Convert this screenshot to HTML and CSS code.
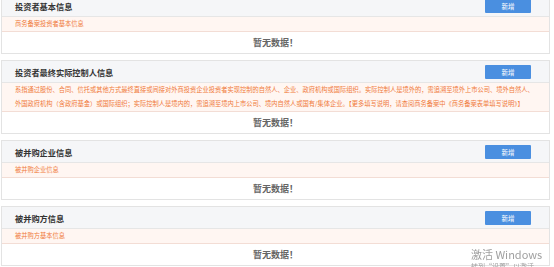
FILE: index.html
```html
<!DOCTYPE html>
<html lang="zh-CN">
<head>
    <meta charset="UTF-8">
    <meta name="viewport" content="width=device-width, initial-scale=1.0">
    <title>外商投资备案信息</title>
    <link rel="stylesheet" href="styles.css">
</head>
<body>
    <div class="page">
        <div class="panel">
            <div class="panel-head">
                <span class="panel-title">投资者基本信息</span>
                <button class="btn-add">新增</button>
            </div>
            <div class="notice">商务备案投资者基本信息</div>
            <div class="empty">暂无数据！</div>
        </div>

        <div class="panel">
            <div class="panel-head">
                <span class="panel-title">投资者最终实际控制人信息</span>
                <button class="btn-add">新增</button>
            </div>
            <div class="notice">系指通过股份、合同、信托或其他方式最终直接或间接对外商投资企业投资者实现控制的自然人、企业、政府机构或国际组织。实际控制人是境外的，需追溯至境外上市公司、境外自然人、<br>外国政府机构（含政府基金）或国际组织；实际控制人是境内的，需追溯至境内上市公司、境内自然人或国有/集体企业。【更多填写说明，请查阅商务备案中《商务备案表单填写说明》】</div>
            <div class="empty">暂无数据！</div>
        </div>

        <div class="panel">
            <div class="panel-head">
                <span class="panel-title">被并购企业信息</span>
                <button class="btn-add">新增</button>
            </div>
            <div class="notice">被并购企业信息</div>
            <div class="empty">暂无数据！</div>
        </div>

        <div class="panel">
            <div class="panel-head">
                <span class="panel-title">被并购方信息</span>
                <button class="btn-add">新增</button>
            </div>
            <div class="notice">被并购方基本信息</div>
            <div class="empty">暂无数据！</div>
        </div>
    </div>

    <!-- 系统水印 -->
    <div class="activate">
        <div class="activate-title">激活 Windows</div>
        <div class="activate-sub">转到“设置”以激活 Windows。</div>
    </div>
</body>
</html>
```

FILE: styles.css
```css
body {
    font-family: "Noto Sans CJK SC", "Noto Sans", sans-serif;
    background-color: #ffffff;
    margin: 0;
    padding: 0;
    overflow: hidden;
}

.page {
    display: flex;
    flex-direction: column;
    gap: 6px;
    margin: -6px 4px 0 1px;
}

.panel {
    border: 1px solid #e3e3e3;
    background-color: #fff;
}

.panel-head {
    display: flex;
    align-items: center;
    justify-content: space-between;
    height: 21px;
    padding: 0 18px 0 13px;
    background-color: #f5f6f8;
    border-bottom: 1px solid #e6e6e6;
}

.panel-title {
    font-size: 8.2px;
    font-weight: bold;
    color: #333;
}

.btn-add {
    width: 46px;
    height: 14px;
    padding: 0;
    border: none;
    border-radius: 1px;
    background-color: #4a8fe0;
    color: #fff;
    font-family: inherit;
    font-size: 6.5px;
    cursor: pointer;
}

.notice {
    padding: 0 4px 0 13px;
    line-height: 14px;
    font-size: 6.25px;
    color: #f07a3a;
    background-color: #fff6f2;
    border-bottom: 1px solid #f3ddd5;
}

.empty {
    height: 21px;
    line-height: 21px;
    text-align: center;
    font-size: 9px;
    font-weight: bold;
    color: #666;
}

.activate {
    position: fixed;
    left: 471px;
    top: 247px;
    color: #a0a0a0;
}

.activate-title {
    font-size: 11px;
    line-height: 14px;
}

.activate-sub {
    font-size: 7px;
    line-height: 10px;
}
```
